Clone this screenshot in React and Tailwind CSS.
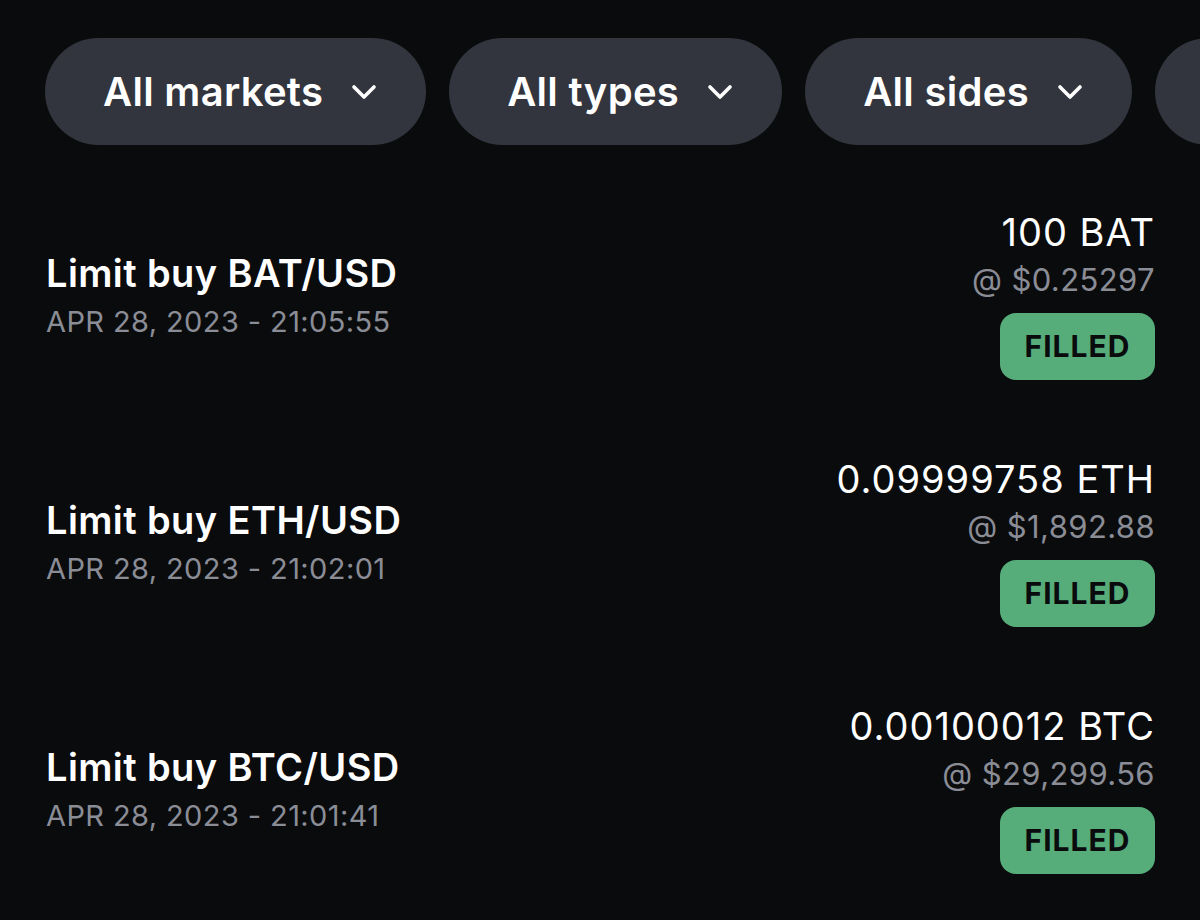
import React from 'react'

const filters = ["All markets", "All types", "All sides"]

const orders = [
  { title: "Limit buy BAT/USD", date: "APR 28, 2023 - 21:05:55", amount: "100 BAT", price: "@ $0.25297" },
  { title: "Limit buy ETH/USD", date: "APR 28, 2023 - 21:02:01", amount: "0.09999758 ETH", price: "@ $1,892.88" },
  { title: "Limit buy BTC/USD", date: "APR 28, 2023 - 21:01:41", amount: "0.00100012 BTC", price: "@ $29,299.56" },
]

function Chevron() {
  return (
    <svg width="26" height="16" viewBox="0 0 26 16" fill="none" aria-hidden="true">
      <polyline points="3,3 13,13 23,3" stroke="white" strokeWidth="3.6" strokeLinecap="round" strokeLinejoin="round" />
    </svg>
  )
}

export default function App() {
  return (
    <div className="w-[1200px] h-[920px] overflow-hidden bg-[#0a0b0d] text-white font-['Inter',sans-serif]">
      <div className="flex gap-[23px] pt-[38px] pl-[45px] whitespace-nowrap">
        {filters.map((f) => (
          <button
            key={f}
            className="shrink-0 h-[107px] flex items-center gap-[28px] pl-[58px] pr-[49px] rounded-full bg-[#32353d] text-[40px] font-semibold tracking-[0.3px]"
          >
            {f}
            <Chevron />
          </button>
        ))}
        {/* next filter pill, scrolled past the edge */}
        <div className="shrink-0 h-[107px] w-[300px] rounded-full bg-[#32353d]" />
      </div>

      <div className="flex flex-col gap-[76px] pt-[64px] pl-[46px] pr-[45px]">
        {orders.map((o) => (
          <div key={o.title} className="flex items-center justify-between">
            <div className="flex flex-col gap-[10px]">
              <div className="text-[38px] leading-[44px] font-semibold tracking-[0.4px]">{o.title}</div>
              <div className="text-[29px] leading-[34px] tracking-[0.4px] text-[#8a8d96]">{o.date}</div>
            </div>
            <div className="flex flex-col items-end">
              <div className="text-[38px] leading-[46px] tracking-[1px]">{o.amount}</div>
              <div className="mt-[6px] text-[31px] leading-[38px] tracking-[0.4px] text-[#8a8d96]">{o.price}</div>
              <div className="mt-[14px] h-[67px] w-[155px] flex items-center justify-center rounded-[16px] bg-[#56ad7a] text-[#0a0b0d] text-[30px] font-bold tracking-[1px]">
                FILLED
              </div>
            </div>
          </div>
        ))}
      </div>
    </div>
  )
}
